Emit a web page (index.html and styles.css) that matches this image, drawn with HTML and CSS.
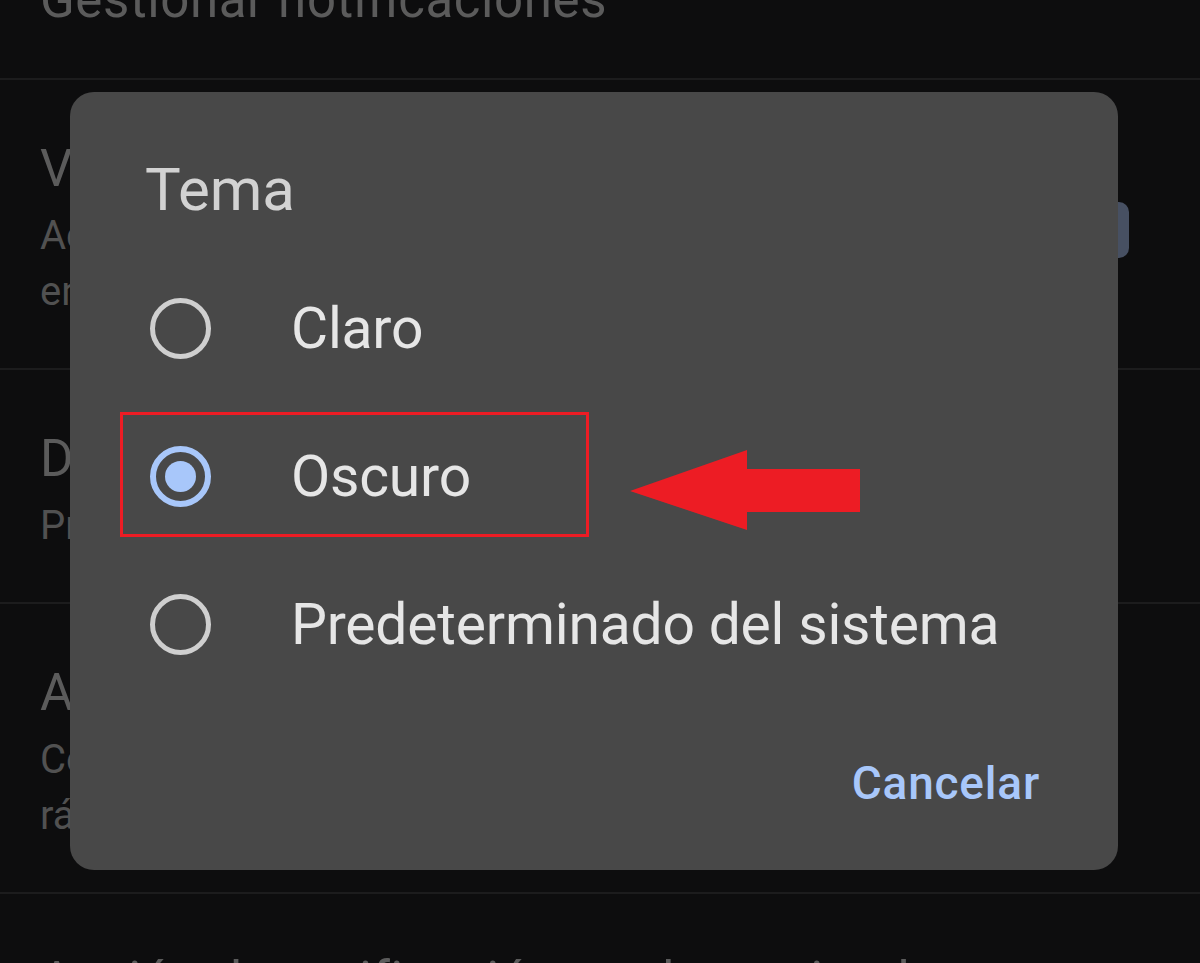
FILE: index.html
```html
<!DOCTYPE html>
<html lang="es">
<head>
<meta charset="utf-8">
<title>Tema</title>
<link rel="stylesheet" href="styles.css">
</head>
<body>
<div class="screen">
  <div class="list">
    <div class="row">
      <div class="row-text">
        <div class="row-title">Gestionar notificaciones</div>
      </div>
    </div>
    <div class="row">
      <div class="row-text">
        <div class="row-title">Vista de conversación</div>
        <div class="row-sub">Acerca los correos con el mismo asunto<br>en una sola conversación</div>
      </div>
      <div class="switch"></div>
    </div>
    <div class="row">
      <div class="row-text">
        <div class="row-title">Densidad de la lista de conversaciones</div>
        <div class="row-sub">Predeterminada</div>
      </div>
    </div>
    <div class="row">
      <div class="row-text">
        <div class="row-title">Acciones al deslizar</div>
        <div class="row-sub">Configura acciones para gestionar correos<br>rápidamente en la lista de conversaciones</div>
      </div>
    </div>
    <div class="row row-last">
      <div class="row-text">
        <div class="row-title">Acción de notificación predeterminada</div>
      </div>
    </div>
  </div>

  <div class="dialog">
    <div class="dialog-title">Tema</div>
    <div class="options">
      <div class="option">
        <span class="radio"></span>
        <span class="option-label">Claro</span>
      </div>
      <div class="option">
        <span class="radio radio-on"></span>
        <span class="option-label">Oscuro</span>
      </div>
      <div class="option">
        <span class="radio"></span>
        <span class="option-label">Predeterminado del sistema</span>
      </div>
    </div>
    <div class="actions">
      <span class="btn-text">Cancelar</span>
    </div>
  </div>

  <div class="highlight"></div>
  <svg class="arrow" width="230" height="80" viewBox="0 0 230 80">
    <polygon points="0,41 117,0 117,19 230,19 230,62 117,62 117,80" fill="#ed1c24"/>
  </svg>
</div>
</body>
</html>
```

FILE: styles.css
```css
html, body {
  margin: 0;
  padding: 0;
  background: #0d0d0e;
}
.screen {
  position: relative;
  width: 1200px;
  height: 963px;
  overflow: hidden;
  background: #0d0d0e;
  font-family: Roboto, "Noto Sans", sans-serif;
}
.list {
  margin-top: -89px;
}
.row {
  display: flex;
  align-items: center;
  padding: 59px 71px 48px 40px;
  border-bottom: 2px solid #1c1c1d;
}
.row-last {
  border-bottom: none;
  padding-top: 57px;
}
.row-text {
  flex: 1;
  white-space: nowrap;
}
.row-title {
  font-size: 51px;
  line-height: 60px;
  letter-spacing: 0.6px;
  color: #5b5b5b;
}
.row-sub {
  margin-top: 9px;
  font-size: 40px;
  line-height: 56px;
  color: #515151;
}
.switch {
  width: 100px;
  height: 56px;
  border-radius: 10px;
  background: #475062;
  flex: none;
}

.dialog {
  position: absolute;
  left: 70px;
  top: 92px;
  width: 1048px;
  height: 778px;
  box-sizing: border-box;
  background: #484848;
  border-radius: 24px;
  padding: 63px 78px 59px 75px;
  display: flex;
  flex-direction: column;
}
.dialog-title {
  font-size: 60px;
  line-height: 70px;
  color: #d2d2d2;
}
.options {
  margin-top: 29px;
  padding-left: 5px;
}
.option {
  height: 148px;
  display: flex;
  align-items: center;
}
.radio {
  width: 61px;
  height: 61px;
  box-sizing: border-box;
  border-radius: 50%;
  border: 5px solid #cfcfcf;
  display: flex;
  align-items: center;
  justify-content: center;
  flex: none;
}
.radio-on {
  border: 6px solid #a8c7fa;
}
.radio-on::after {
  content: "";
  width: 31px;
  height: 31px;
  border-radius: 50%;
  background: #a8c7fa;
}
.option-label {
  margin-left: 80px;
  font-size: 57px;
  letter-spacing: -0.2px;
  color: #e6e6e6;
  white-space: nowrap;
}
.actions {
  margin-top: 57px;
  display: flex;
  justify-content: flex-end;
}
.btn-text {
  font-size: 46px;
  line-height: 56px;
  font-weight: 500;
  letter-spacing: 0.8px;
  color: #a8c7fa;
}

.highlight {
  position: absolute;
  left: 120px;
  top: 412px;
  width: 469px;
  height: 125px;
  box-sizing: border-box;
  border: 3px solid #ed1c24;
}
.arrow {
  position: absolute;
  left: 630px;
  top: 450px;
}
```
